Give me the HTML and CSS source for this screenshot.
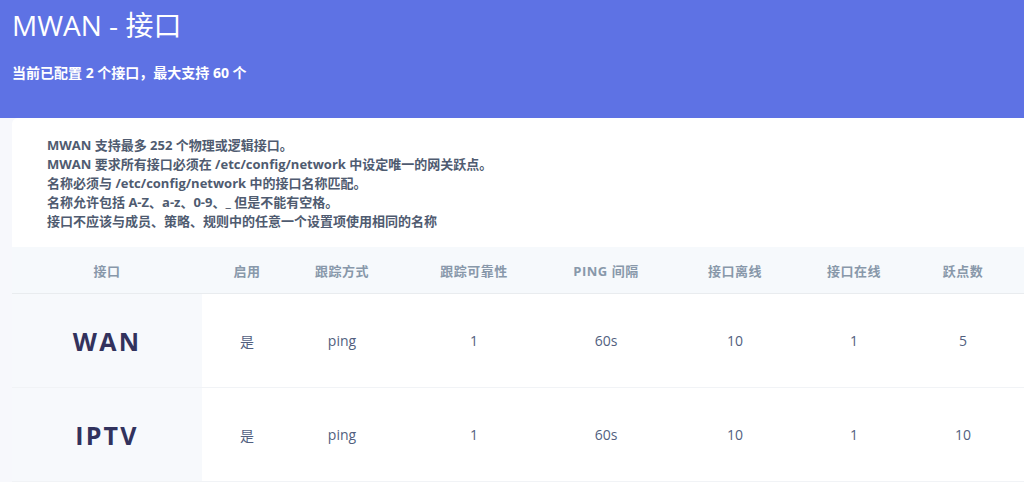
FILE: index.html
```html
<!DOCTYPE html>
<html>

<head>
    <meta charset="UTF-8">
    <title>MWAN - 接口</title>
    <link rel="stylesheet" href="styles.css">
</head>

<body>
    <div class="header">
        <h1 class="title">MWAN - 接口</h1>
        <p class="summary">当前已配置 2 个接口，最大支持 60 个</p>
    </div>
    <div class="card">
        <div class="notes">
            MWAN 支持最多 252 个物理或逻辑接口。<br>
            MWAN 要求所有接口必须在 /etc/config/network 中设定唯一的网关跃点。<br>
            名称必须与 /etc/config/network 中的接口名称匹配。<br>
            名称允许包括 A-Z、a-z、0-9、_ 但是不能有空格。<br>
            接口不应该与成员、策略、规则中的任意一个设置项使用相同的名称
        </div>
        <table class="list">
            <colgroup>
                <col style="width: 190px">
                <col style="width: 90px">
                <col style="width: 100px">
                <col style="width: 164px">
                <col style="width: 100px">
                <col style="width: 158px">
                <col style="width: 80px">
                <col style="width: 138px">
            </colgroup>
            <thead>
                <tr>
                    <th>接口</th>
                    <th>启用</th>
                    <th>跟踪方式</th>
                    <th>跟踪可靠性</th>
                    <th>PING 间隔</th>
                    <th>接口离线</th>
                    <th>接口在线</th>
                    <th>跃点数</th>
                </tr>
            </thead>
            <tbody>
                <tr>
                    <td class="name">WAN</td>
                    <td>是</td>
                    <td>ping</td>
                    <td>1</td>
                    <td>60s</td>
                    <td>10</td>
                    <td>1</td>
                    <td>5</td>
                </tr>
                <tr>
                    <td class="name">IPTV</td>
                    <td>是</td>
                    <td>ping</td>
                    <td>1</td>
                    <td>60s</td>
                    <td>10</td>
                    <td>1</td>
                    <td>10</td>
                </tr>
            </tbody>
        </table>
    </div>
</body>

</html>
```

FILE: styles.css
```css
html,
body {
    margin: 0;
    padding: 0;
}

body {
    font-family: "Open Sans", "Noto Sans CJK SC", sans-serif;
    background-color: #f7f8fc;
    overflow: hidden;
    width: 1024px;
}

.header {
    background-color: #5e72e4;
    color: #fff;
    height: 118px;
    padding: 0 12px;
    box-sizing: border-box;
}

.title {
    margin: 0;
    padding-top: 7px;
    font-size: 28px;
    font-weight: 400;
    line-height: 36px;
}

.summary {
    margin: 0;
    padding-top: 20px;
    font-size: 14px;
    font-weight: 700;
    line-height: 20px;
}

.card {
    background-color: #fff;
    margin-left: 12px;
    width: 1020px;
    border-top-left-radius: 6px;
    border-top-right-radius: 6px;
    min-height: 364px;
}

.notes {
    padding: 18px 35px 16px;
    font-size: 13px;
    font-weight: 700;
    line-height: 19px;
    color: #4f5b70;
}

.list {
    width: 1020px;
    table-layout: fixed;
    border-collapse: collapse;
}

.list th {
    background-color: #f6f9fc;
    color: #8898aa;
    font-size: 13px;
    font-weight: 700;
    height: 46px;
    padding: 0;
    text-align: center;
    letter-spacing: 0.5px;
    border-bottom: 1px solid #e9ecef;
}

.list td {
    height: 93px;
    padding: 0;
    text-align: center;
    font-size: 14px;
    color: #525f7f;
    border-bottom: 1px solid #f1f3f6;
}

.list td.name {
    background-color: #f7f9fc;
    color: #32325d;
    font-size: 25px;
    font-weight: 700;
    letter-spacing: 2.2px;
}
```
